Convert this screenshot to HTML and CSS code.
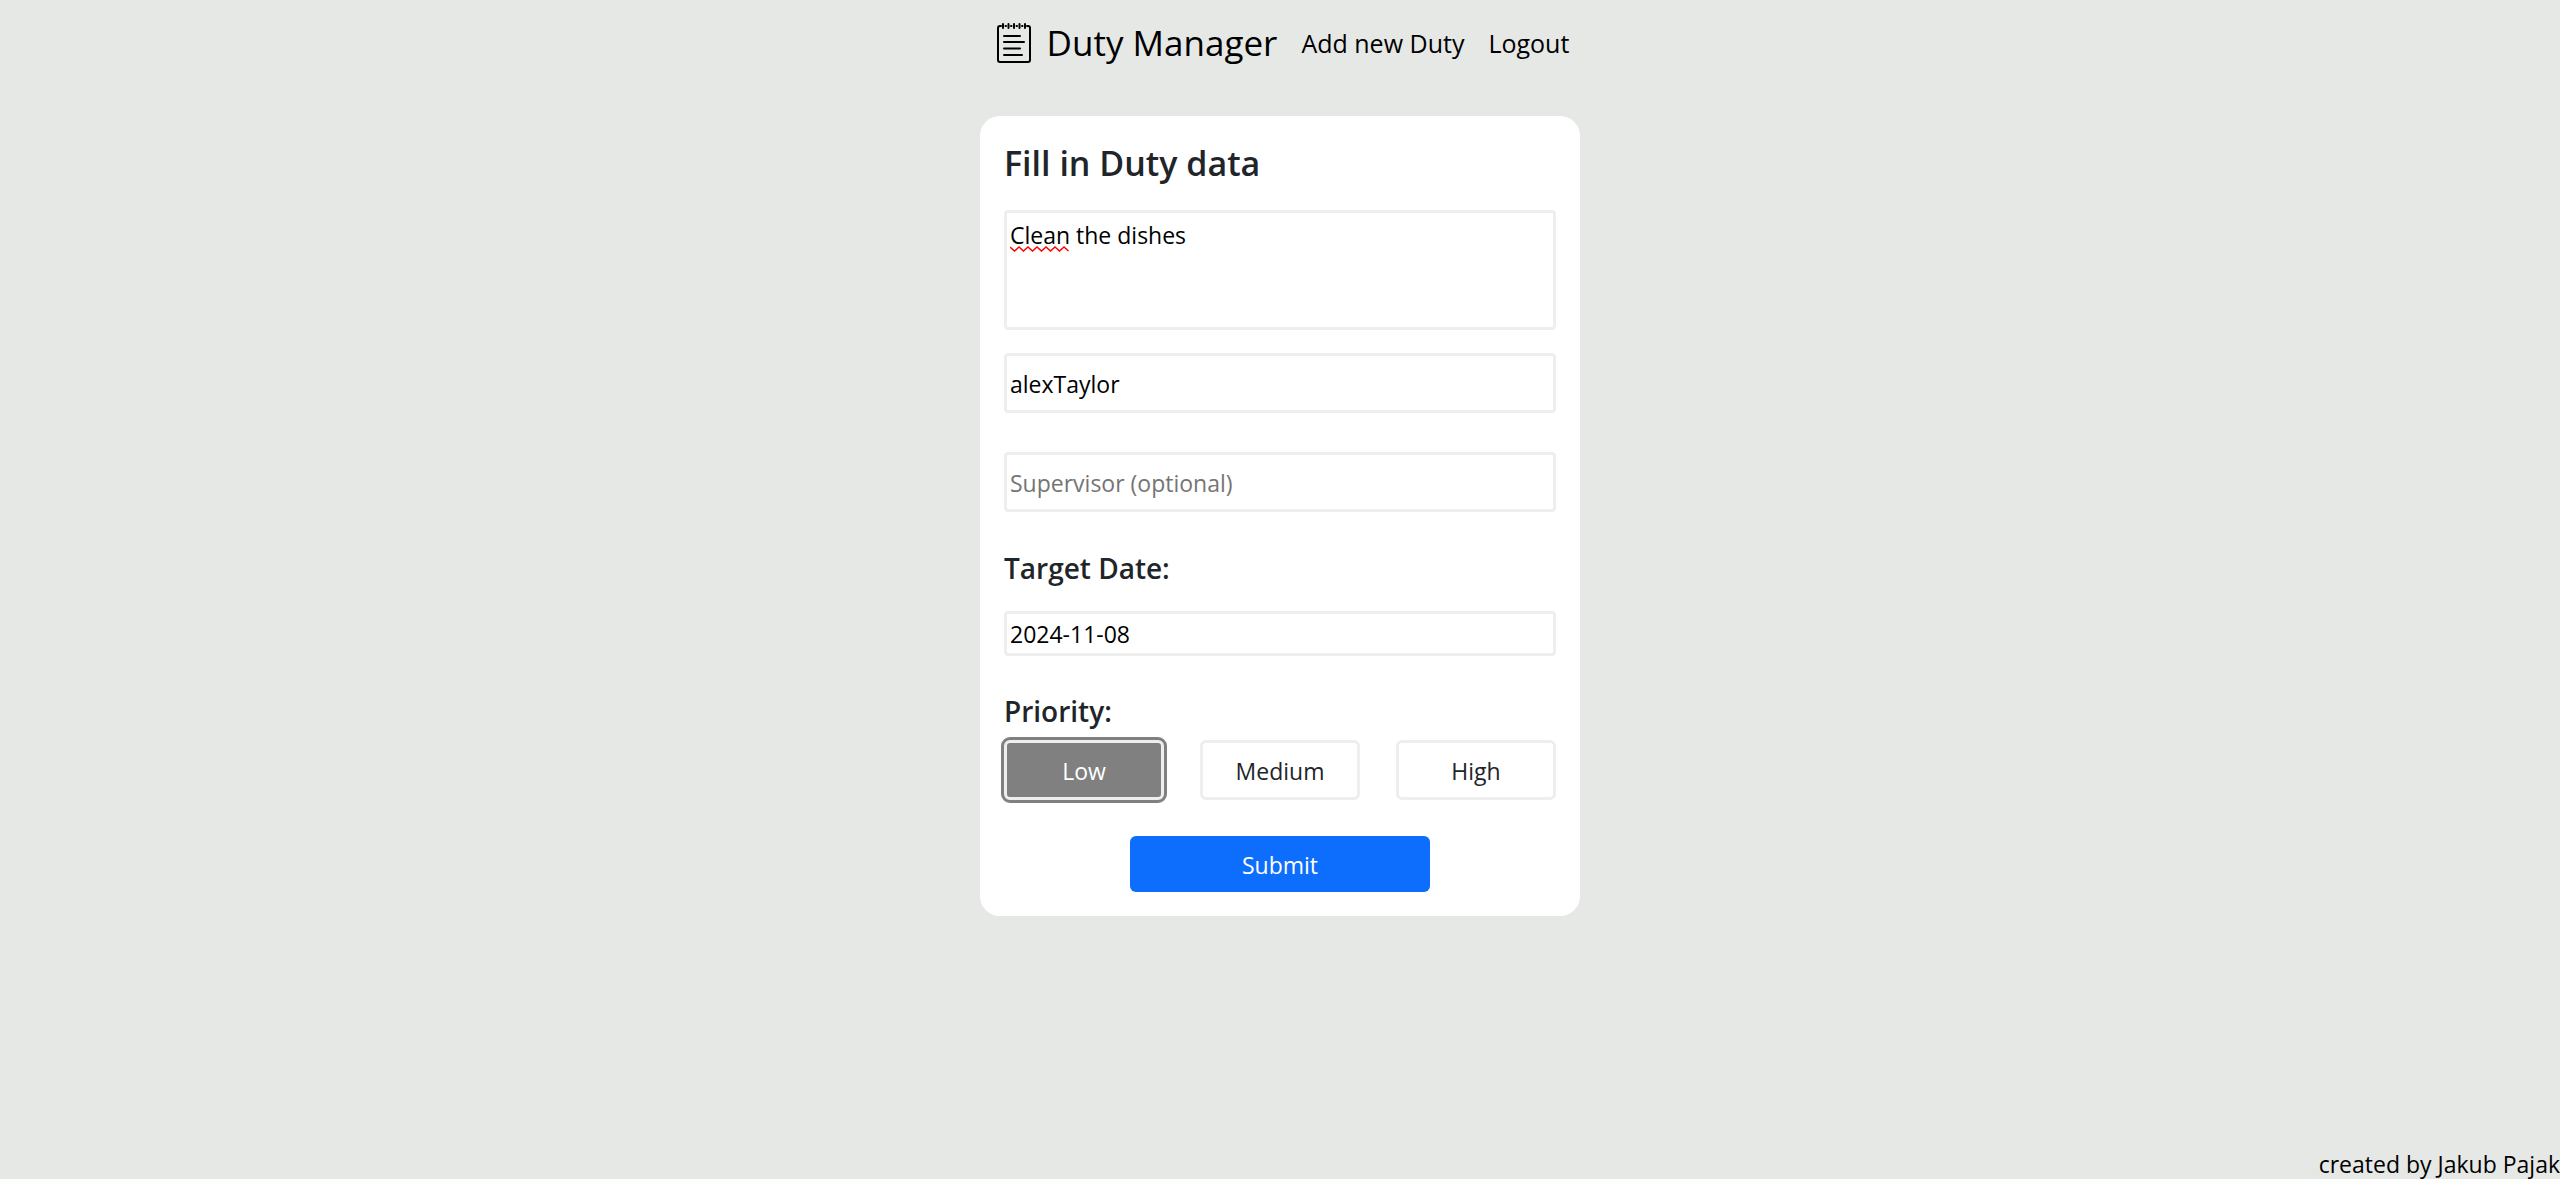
FILE: index.html
```html
<!DOCTYPE html>
<html lang="en">
<head>
<meta charset="utf-8">
<meta name="viewport" content="width=device-width, initial-scale=1">
<title>Duty Manager</title>
<link rel="stylesheet" href="styles.css">
</head>
<body>
<header>
  <nav class="navbar">
    <a class="brand" href="#">
      <svg class="brand-icon" viewBox="0 0 34 40" fill="none" stroke="currentColor" stroke-width="2" stroke-linecap="round" aria-hidden="true">
        <path d="M4 3H3a2 2 0 0 0-2 2v32a2 2 0 0 0 2 2h28a2 2 0 0 0 2-2V5a2 2 0 0 0-2-2h-1"/>
        <path d="M6 1v4M11.500 1v4M17 1v4M22.500 1v4M28 1v4M8.500 3h.5M14 3h.5M19.500 3h.5M25 3h.5"/>
        <path d="M7 13h16M7 19h20M7 25.500h16M7 32h18"/>
      </svg>
      <span>Duty Manager</span>
    </a>
    <a class="nav-link" href="#">Add new Duty</a>
    <a class="nav-link" href="#">Logout</a>
  </nav>
</header>
<main>
  <form class="card">
    <h1 class="title">Fill in Duty data</h1>
    <div class="description">
      <textarea class="field area" aria-label="Description" spellcheck="false">Clean the dishes</textarea>
      <svg class="squiggle" viewBox="0 0 59 6" fill="none" stroke="#f00" stroke-width="1.500" aria-hidden="true">
        <path d="M0 1l4.500 4L9 1l4.500 4L18 1l4.500 4L27 1l4.500 4L36 1l4.500 4L45 1l4.500 4L54 1l4.500 4"/>
      </svg>
    </div>
    <input class="field user" type="text" aria-label="User" value="alexTaylor">
    <input class="field user" type="text" aria-label="Supervisor" placeholder="Supervisor (optional)">
    <label class="label" for="date">Target Date:</label>
    <input class="field date" id="date" type="text" value="2024-11-08">
    <h2 class="label priority-label" id="priority">Priority:</h2>
    <div class="priorities" role="group" aria-labelledby="priority">
      <button class="option selected" type="button" aria-pressed="true">Low</button>
      <button class="option" type="button" aria-pressed="false">Medium</button>
      <button class="option" type="button" aria-pressed="false">High</button>
    </div>
    <button class="submit" type="submit">Submit</button>
  </form>
</main>
<footer class="footer">created by Jakub Pajak</footer>
</body>
</html>
```
FILE: styles.css
```css
*, *::before, *::after {
  box-sizing: border-box;
}

body {
  display: flex;
  flex-direction: column;
  min-height: 100vh;
  margin: 0;
  background: #e6e8e5;
  color: #212529;
  font: 23px/36px "Segoe UI", "Open Sans", "Noto Sans", sans-serif;
}

.navbar {
  display: flex;
  justify-content: center;
  align-items: center;
  flex-wrap: wrap;
  gap: 0 24px;
  min-height: 86px;
  padding-left: 6px;
}

.brand, .nav-link {
  color: #000;
  text-decoration: none;
}

.brand {
  display: flex;
  align-items: center;
  gap: 16px;
  font-size: 35px;
  line-height: 54px;
}

.brand-icon {
  width: 34px;
  height: 40px;
}

.nav-link {
  font-size: 25px;
}

main {
  flex: 1;
  padding: 30px 16px;
}

.card {
  display: flex;
  flex-direction: column;
  width: 100%;
  max-width: 600px;
  margin: 0 auto;
  padding: 24px;
  border-radius: 20px;
  background: #fff;
}

.title {
  margin: 0 0 24px;
  font-size: 34px;
  font-weight: 600;
  line-height: 46px;
}

.description {
  position: relative;
  display: flex;
  margin-bottom: 23px;
}

.field {
  width: 100%;
  padding: 0 3px;
  border: 3px solid #eee;
  border-radius: 4px;
  background: #fff;
  color: #000;
  font: inherit;
}

.field::placeholder {
  color: #757575;
  opacity: 1;
}

.area {
  height: 120px;
  padding-top: 4px;
  resize: none;
}

.squiggle {
  position: absolute;
  top: 36px;
  left: 6px;
  width: 59px;
  height: 6px;
}

.user {
  height: 60px;
  margin-bottom: 39px;
  padding-top: 2px;
}

.label {
  margin: 0 0 26px;
  font-size: 28px;
  font-weight: 600;
  line-height: 34px;
}

.date {
  height: 45px;
  margin-bottom: 38px;
}

.priority-label {
  margin-bottom: 12px;
}

.priorities {
  display: grid;
  grid-template-columns: repeat(3, 1fr);
  gap: 36px;
  margin-bottom: 36px;
}

.option {
  height: 60px;
  padding: 2px 0 0;
  border: 3px solid #eee;
  border-radius: 6px;
  background: #fff;
  color: #212529;
  font: inherit;
}

.selected {
  outline: 3px solid #808080;
  background: #808080;
  color: #fff;
}

.submit {
  align-self: center;
  width: 300px;
  max-width: 100%;
  height: 56px;
  padding: 2px 0 0;
  border: 0;
  border-radius: 6px;
  background: #0d6efd;
  color: #fff;
  font: inherit;
}

.footer {
  color: #000;
  line-height: 30px;
  text-align: right;
}
```
